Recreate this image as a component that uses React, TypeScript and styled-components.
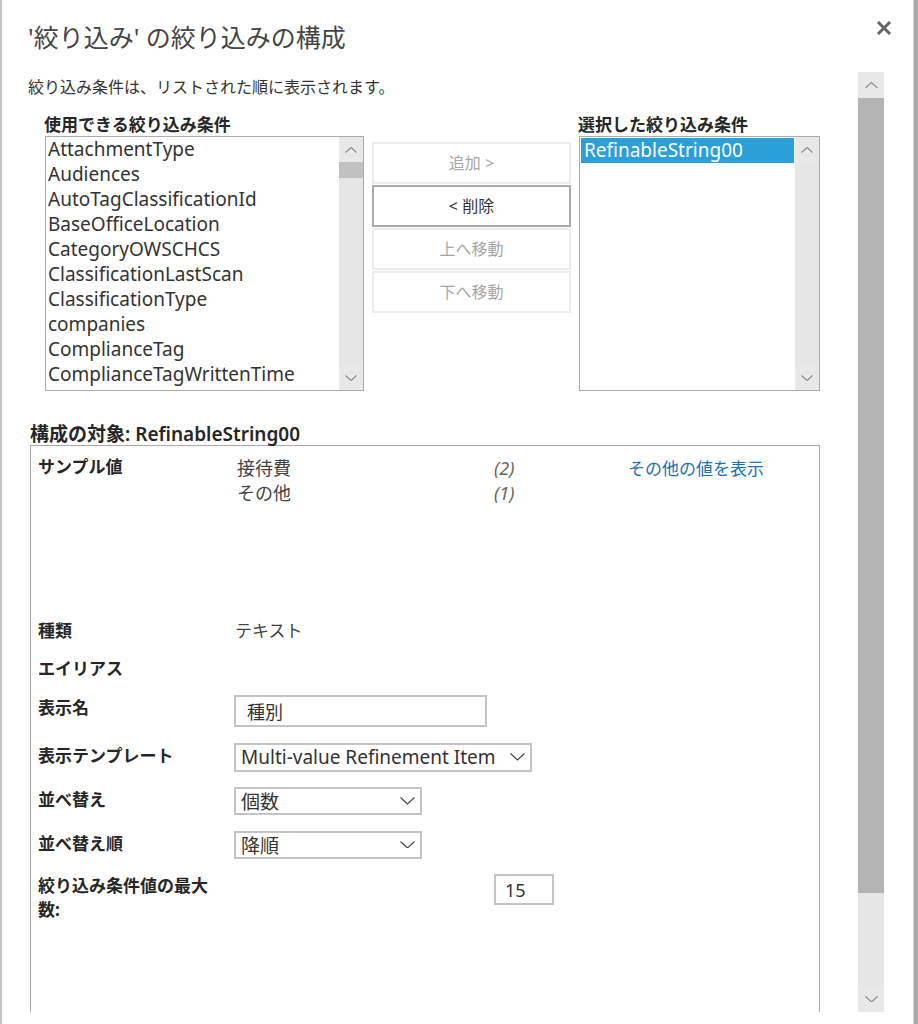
import React from "react";
import styled, { createGlobalStyle } from "styled-components";

const GlobalStyle = createGlobalStyle`
  html, body { margin: 0; padding: 0; background: #fff; }
  body {
    font-family: "Noto Sans", "Noto Sans CJK JP", sans-serif;
    color: #333;
  }
  * { box-sizing: border-box; }
`;

const Frame = styled.div`
  display: flex;
  width: 918px;
  height: 1024px;
  overflow: hidden;
  background: #fff;
`;

const Dialog = styled.div`
  flex: 1;
  min-width: 0;
  display: flex;
  flex-direction: column;
  border-left: 2px solid #c4c4c4;
`;

const EdgeStrip = styled.div`
  width: 5px;
  background: #a9a9a9;
  border-left: 1px solid #d2d2d2;
`;

const Header = styled.div`
  height: 72px;
  display: flex;
  align-items: flex-start;
  justify-content: space-between;
  padding: 20px 21px 0 26px;
`;

const Title = styled.h1`
  margin: 0;
  font-size: 25px;
  line-height: 34px;
  font-weight: 400;
  color: #444;
`;

const CloseButton = styled.button`
  width: 16px;
  height: 16px;
  padding: 0;
  border: 0;
  background: transparent;
  display: flex;
  cursor: pointer;
`;

const Body = styled.div`
  flex: 1;
  min-height: 0;
  display: flex;
  padding-right: 29px;
  margin-bottom: 12px;
`;

const Content = styled.div`
  flex: 1;
  min-width: 0;
  overflow: hidden;
  padding: 5px 0 0 26px;
`;

const Description = styled.p`
  margin: 0;
  font-size: 16px;
  line-height: 20px;
  color: #333;
`;

const ListsRow = styled.div`
  display: flex;
  align-items: flex-start;
  margin-top: 17px;
  padding-left: 16px;
`;

const ListColumn = styled.div<{ $gap?: number }>`
  display: flex;
  flex-direction: column;
  margin-left: ${(p) => p.$gap ?? 0}px;
`;

const GroupLabel = styled.div`
  font-size: 17px;
  line-height: 22px;
  font-weight: 700;
  color: #262626;
  white-space: nowrap;
`;

const ListBox = styled.div<{ $w: number }>`
  display: flex;
  width: ${(p) => p.$w}px;
  height: 255px;
  margin-left: 1px;
  border: 1px solid #ababab;
  background: #fff;
`;

const ListItems = styled.ul`
  flex: 1;
  min-width: 0;
  margin: 0;
  padding: 0 0 0 1px;
  list-style: none;
  overflow: hidden;
`;

const ListItem = styled.li<{ $selected?: boolean }>`
  height: 25px;
  line-height: 25px;
  font-size: 19px;
  padding-left: ${(p) => (p.$selected ? 3 : 1)}px;
  margin-top: ${(p) => (p.$selected ? 1 : 0)}px;
  margin-right: ${(p) => (p.$selected ? 1 : 0)}px;
  white-space: nowrap;
  background: ${(p) => (p.$selected ? "#2a9fd8" : "transparent")};
  color: ${(p) => (p.$selected ? "#fff" : "#333")};
`;

const MiniScroll = styled.div`
  width: 24px;
  display: flex;
  flex-direction: column;
  background: #e6e6e6;
`;

const ScrollArrow = styled.div<{ $h: number }>`
  height: ${(p) => p.$h}px;
  display: flex;
  align-items: center;
  justify-content: center;
  background: #e8e8e8;
`;

const Thumb = styled.div<{ $h: number; $tone: string }>`
  height: ${(p) => p.$h}px;
  background: ${(p) => p.$tone};
`;

const Track = styled.div`
  flex: 1;
`;

const ButtonColumn = styled.div`
  display: flex;
  flex-direction: column;
  gap: 1px;
  width: 199px;
  margin-left: 8px;
  padding-top: 28px;
`;

const ActionButton = styled.button<{ $enabled?: boolean }>`
  height: 42px;
  width: 100%;
  border: 2px solid ${(p) => (p.$enabled ? "#ababab" : "#ececec")};
  background: #fff;
  color: ${(p) => (p.$enabled ? "#333" : "#a6a6a6")};
  font-family: inherit;
  font-size: 16px;
  line-height: 20px;
  padding: 0;
`;

const ConfigTitle = styled.div`
  margin-top: 32px;
  padding-left: 2px;
  font-size: 19px;
  line-height: 22px;
  font-weight: 600;
  color: #262626;
`;

const ConfigBox = styled.div`
  width: 790px;
  height: 640px;
  margin-left: 2px;
  border: 1px solid #a9a9a9;
  padding: 10px 0 0 7px;
`;

const SampleGrid = styled.div`
  display: grid;
  grid-template-columns: 199px 257px 134px auto;
  height: 164px;
  align-content: start;
`;

const FieldLabel = styled.div<{ $pt?: number; $maxW?: number; $lh?: number }>`
  font-size: 17px;
  line-height: ${(p) => p.$lh ?? 22}px;
  font-weight: 700;
  color: #262626;
  padding-top: ${(p) => p.$pt ?? 0}px;
  max-width: ${(p) => (p.$maxW ? `${p.$maxW}px` : "none")};
`;

const ValueList = styled.div`
  display: flex;
  flex-direction: column;
`;

const ValueText = styled.div`
  font-size: 18px;
  line-height: 25px;
  color: #444;
  white-space: nowrap;
`;

const CountText = styled(ValueText)`
  font-style: italic;
  color: #666;
`;

const MoreLink = styled.a`
  font-size: 17px;
  line-height: 25px;
  color: #1d6fb8;
  text-decoration: none;
  white-space: nowrap;
`;

const FormGrid = styled.div`
  display: grid;
  grid-template-columns: 196px 1fr;
  row-gap: 15.5px;
  align-items: start;
`;

const PlainValue = styled.div`
  font-size: 17px;
  line-height: 22px;
  color: #444;
  padding-left: 1px;
`;

const TextField = styled.div<{ $w: number; $h: number; $pl: number; $ml?: number }>`
  width: ${(p) => p.$w}px;
  height: ${(p) => p.$h}px;
  margin-left: ${(p) => p.$ml ?? 0}px;
  border: 2px solid #c4c4c4;
  padding-left: ${(p) => p.$pl}px;
  display: flex;
  align-items: center;
  font-size: 18px;
  color: #333;
  background: #fff;
`;

const SelectBox = styled.div<{ $w: number; $h: number }>`
  width: ${(p) => p.$w}px;
  height: ${(p) => p.$h}px;
  border: 2px solid #c4c4c4;
  padding: 0 5px 0 5px;
  display: flex;
  align-items: center;
  justify-content: space-between;
  font-size: 19px;
  color: #333;
  background: #fff;
  white-space: nowrap;
`;

const MainScroll = styled.div`
  width: 26px;
  display: flex;
  flex-direction: column;
  background: #e6e6e6;
`;

const Chevron = ({ dir, w = 12, color = "#8a8a8a" }: { dir: "up" | "down"; w?: number; color?: string }) => {
  const h = w / 2;
  const pts = dir === "up" ? `0.5,${h - 0.5} ${w / 2},0.5 ${w - 0.5},${h - 0.5}` : `0.5,0.5 ${w / 2},${h - 0.5} ${w - 0.5},0.5`;
  return (
    <svg width={w} height={h} viewBox={`0 0 ${w} ${h}`} fill="none">
      <polyline points={pts} stroke={color} strokeWidth="1.1" />
    </svg>
  );
};

const available = [
  "AttachmentType",
  "Audiences",
  "AutoTagClassificationId",
  "BaseOfficeLocation",
  "CategoryOWSCHCS",
  "ClassificationLastScan",
  "ClassificationType",
  "companies",
  "ComplianceTag",
  "ComplianceTagWrittenTime",
];

const MiniScrollbar = ({ thumb }: { thumb?: boolean }) => (
  <MiniScroll>
    <ScrollArrow $h={25}>
      <Chevron dir="up" />
    </ScrollArrow>
    {thumb && <Thumb $h={16} $tone="#c1c1c1" />}
    <Track />
    <ScrollArrow $h={25}>
      <Chevron dir="down" />
    </ScrollArrow>
  </MiniScroll>
);

export default function App() {
  return (
    <>
      <GlobalStyle />
      <Frame>
        <Dialog>
          <Header>
            <Title>'絞り込み' の絞り込みの構成</Title>
            <CloseButton aria-label="閉じる">
              <svg width="16" height="16" viewBox="0 0 16 16">
                <path d="M2 2 L14 14 M14 2 L2 14" stroke="#666" strokeWidth="3" />
              </svg>
            </CloseButton>
          </Header>
          <Body>
            <Content>
              <Description>絞り込み条件は、リストされた順に表示されます。</Description>
              <ListsRow>
                <ListColumn>
                  <GroupLabel>使用できる絞り込み条件</GroupLabel>
                  <ListBox $w={319}>
                    <ListItems>
                      {available.map((a) => (
                        <ListItem key={a}>{a}</ListItem>
                      ))}
                    </ListItems>
                    <MiniScrollbar thumb />
                  </ListBox>
                </ListColumn>
                <ButtonColumn>
                  <ActionButton>追加 &gt;</ActionButton>
                  <ActionButton $enabled>&lt; 削除</ActionButton>
                  <ActionButton>上へ移動</ActionButton>
                  <ActionButton>下へ移動</ActionButton>
                </ButtonColumn>
                <ListColumn $gap={7}>
                  <GroupLabel>選択した絞り込み条件</GroupLabel>
                  <ListBox $w={241}>
                    <ListItems>
                      <ListItem $selected>RefinableString00</ListItem>
                    </ListItems>
                    <MiniScrollbar />
                  </ListBox>
                </ListColumn>
              </ListsRow>

              <ConfigTitle>構成の対象: RefinableString00</ConfigTitle>
              <ConfigBox>
                <SampleGrid>
                  <FieldLabel>サンプル値</FieldLabel>
                  <ValueList>
                    <ValueText>接待費</ValueText>
                    <ValueText>その他</ValueText>
                  </ValueList>
                  <ValueList>
                    <CountText>(2)</CountText>
                    <CountText>(1)</CountText>
                  </ValueList>
                  <MoreLink href="#">その他の値を表示</MoreLink>
                </SampleGrid>
                <FormGrid>
                  <FieldLabel>種類</FieldLabel>
                  <PlainValue>テキスト</PlainValue>

                  <FieldLabel>エイリアス</FieldLabel>
                  <div />

                  <FieldLabel $pt={2}>表示名</FieldLabel>
                  <TextField $w={253} $h={32} $pl={11}>種別</TextField>

                  <FieldLabel $pt={2}>表示テンプレート</FieldLabel>
                  <SelectBox $w={298} $h={29}>
                    <span>Multi-value Refinement Item</span>
                    <Chevron dir="down" w={15} color="#444" />
                  </SelectBox>

                  <FieldLabel $pt={2}>並べ替え</FieldLabel>
                  <SelectBox $w={188} $h={28}>
                    <span>個数</span>
                    <Chevron dir="down" w={15} color="#444" />
                  </SelectBox>

                  <FieldLabel $pt={2}>並べ替え順</FieldLabel>
                  <SelectBox $w={188} $h={28}>
                    <span>降順</span>
                    <Chevron dir="down" w={15} color="#444" />
                  </SelectBox>

                  <FieldLabel $maxW={182} $lh={24}>絞り込み条件値の最大数:</FieldLabel>
                  <TextField $w={60} $h={31} $pl={9} $ml={260}>15</TextField>
                </FormGrid>
              </ConfigBox>
            </Content>
            <MainScroll>
              <ScrollArrow $h={26}>
                <Chevron dir="up" w={13} />
              </ScrollArrow>
              <Thumb $h={795} $tone="#b4b4b4" />
              <Track />
              <ScrollArrow $h={26}>
                <Chevron dir="down" w={13} />
              </ScrollArrow>
            </MainScroll>
          </Body>
        </Dialog>
        <EdgeStrip />
      </Frame>
    </>
  );
}
